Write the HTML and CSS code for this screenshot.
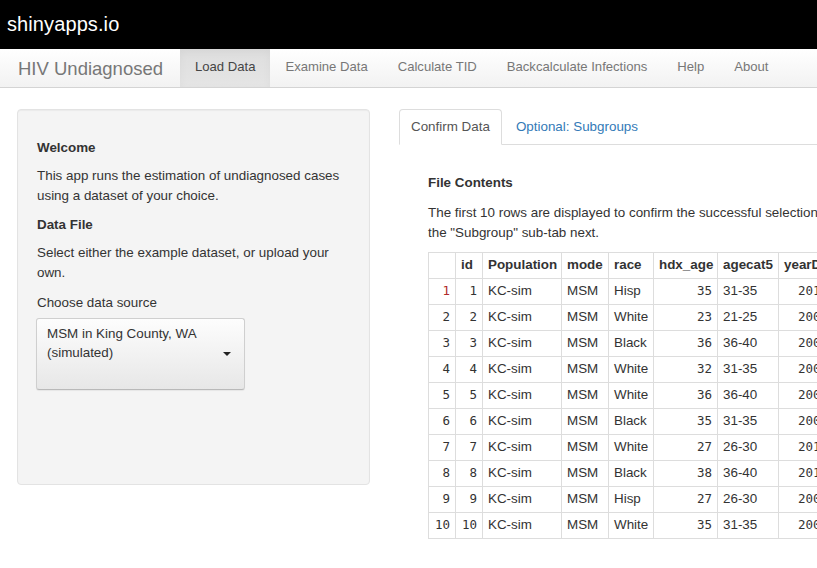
FILE: index.html
```html
<!DOCTYPE html>
<html>
<head>
<meta charset="utf-8">
<title>HIV Undiagnosed</title>
<link rel="stylesheet" href="styles.css">
</head>
<body>
<header class="topbar"><span class="logo">shinyapps.io</span></header>
<nav class="navbar">
  <span class="brand">HIV Undiagnosed</span>
  <ul class="nav">
    <li class="active"><a>Load Data</a></li>
    <li><a>Examine Data</a></li>
    <li><a>Calculate TID</a></li>
    <li><a>Backcalculate Infections</a></li>
    <li><a>Help</a></li>
    <li><a>About</a></li>
  </ul>
</nav>
<div class="main">
  <aside class="well">
    <h5>Welcome</h5>
    <p>This app runs the estimation of undiagnosed cases using a dataset of your choice.</p>
    <h5>Data File</h5>
    <p>Select either the example dataset, or upload your own.</p>
    <div class="form-group">
      <label class="label">Choose data source</label>
      <div class="select">
        <span class="select-text">MSM in King County, WA (simulated)</span>
        <span class="caret"></span>
      </div>
    </div>
    <div class="spacer"></div>
  </aside>
  <section class="content">
    <ul class="tabs">
      <li class="active"><a>Confirm Data</a></li>
      <li><a class="link">Optional: Subgroups</a></li>
    </ul>
    <div class="pane">
      <h5>File Contents</h5>
      <p>The first 10 rows are displayed to confirm the successful selection of a dataset. To analyze subgroups, see<br>the "Subgroup" sub-tab next.</p>
      <table class="data">
        <colgroup>
          <col class="c-rn"><col class="c-id"><col class="c-pop"><col class="c-mode"><col class="c-race"><col class="c-age"><col class="c-cat"><col class="c-yr">
        </colgroup>
        <thead>
          <tr><th></th><th>id</th><th>Population</th><th>mode</th><th>race</th><th>hdx_age</th><th>agecat5</th><th>yearDx</th></tr>
        </thead>
        <tbody>
          <tr><td class="num rn first">1</td><td class="num">1</td><td>KC-sim</td><td>MSM</td><td>Hisp</td><td class="num">35</td><td>31-35</td><td class="num">2011</td></tr>
          <tr><td class="num rn">2</td><td class="num">2</td><td>KC-sim</td><td>MSM</td><td>White</td><td class="num">23</td><td>21-25</td><td class="num">2006</td></tr>
          <tr><td class="num rn">3</td><td class="num">3</td><td>KC-sim</td><td>MSM</td><td>Black</td><td class="num">36</td><td>36-40</td><td class="num">2007</td></tr>
          <tr><td class="num rn">4</td><td class="num">4</td><td>KC-sim</td><td>MSM</td><td>White</td><td class="num">32</td><td>31-35</td><td class="num">2009</td></tr>
          <tr><td class="num rn">5</td><td class="num">5</td><td>KC-sim</td><td>MSM</td><td>White</td><td class="num">36</td><td>36-40</td><td class="num">2008</td></tr>
          <tr><td class="num rn">6</td><td class="num">6</td><td>KC-sim</td><td>MSM</td><td>Black</td><td class="num">35</td><td>31-35</td><td class="num">2005</td></tr>
          <tr><td class="num rn">7</td><td class="num">7</td><td>KC-sim</td><td>MSM</td><td>White</td><td class="num">27</td><td>26-30</td><td class="num">2012</td></tr>
          <tr><td class="num rn">8</td><td class="num">8</td><td>KC-sim</td><td>MSM</td><td>Black</td><td class="num">38</td><td>36-40</td><td class="num">2010</td></tr>
          <tr><td class="num rn">9</td><td class="num">9</td><td>KC-sim</td><td>MSM</td><td>Hisp</td><td class="num">27</td><td>26-30</td><td class="num">2009</td></tr>
          <tr><td class="num rn">10</td><td class="num">10</td><td>KC-sim</td><td>MSM</td><td>White</td><td class="num">35</td><td>31-35</td><td class="num">2006</td></tr>
        </tbody>
      </table>
    </div>
  </section>
</div>
</body>
</html>
```

FILE: styles.css
```css
* { box-sizing: border-box; }
html, body { margin: 0; padding: 0; }
body {
  width: 817px;
  height: 568px;
  overflow: hidden;
  background: #fff;
  color: #333;
  font-family: "Liberation Sans", Arial, Helvetica, sans-serif;
  font-size: 13.4px;
  line-height: 20px;
}

.topbar {
  height: 49px;
  background: #000;
  padding-left: 7px;
  line-height: 49px;
}
.logo {
  color: #fff;
  font-size: 20px;
  font-weight: normal;
  letter-spacing: 0.1px;
}

.navbar {
  display: flex;
  align-items: stretch;
  height: 39px;
  background: linear-gradient(#ffffff, #f2f2f2);
  border-bottom: 1px solid #d4d4d4;
  padding-left: 3px;
}
.brand {
  font-size: 18.5px;
  color: #777;
  padding: 0 17px 0 15px;
  line-height: 20px;
  padding-top: 10px;
}
.nav {
  display: flex;
  list-style: none;
  margin: 0;
  padding: 0;
  font-size: 13.1px;
}
.nav li a {
  display: block;
  height: 38px;
  padding: 8px 15px 10px;
  color: #777;
}
.nav li.active a {
  color: #444;
  background: linear-gradient(#dedede, #e5e5e5);
  box-shadow: inset 0 3px 8px rgba(0,0,0,0.04);
}

.main {
  display: flex;
  align-items: flex-start;
  padding: 21px 0 0 17px;
  gap: 29px;
}

.well {
  flex: none;
  width: 353px;
  background: #f4f4f4;
  border: 1px solid #e3e3e3;
  border-radius: 4px;
  box-shadow: inset 0 1px 1px rgba(0,0,0,0.04);
  padding: 19px 19px 19px 19px;
}
h5 {
  font-size: 13.4px;
  font-weight: bold;
  line-height: 17px;
  margin: 10px 0 10px;
}
p { margin: 0 0 10px; }
.form-group { margin-bottom: 15px; }
.label {
  display: block;
  margin-bottom: 5px;
  font-weight: normal;
}
.select {
  display: flex;
  align-items: flex-start;
  width: 209px;
  height: 72px;
  margin-left: -1px;
  padding: 5px 13px 0 10px;
  border: 1px solid #cfcfcf;
  border-bottom-color: #b9b9b9;
  border-radius: 3px;
  background: linear-gradient(#fdfdfd, #e7e7e7);
  box-shadow: 0 1px 1px rgba(0,0,0,0.06);
  line-height: 19px;
}
.select-text { flex: 1; }
.caret {
  flex: none;
  width: 0;
  height: 0;
  margin-top: 28px;
  border-top: 4px solid #222;
  border-left: 4px solid transparent;
  border-right: 4px solid transparent;
}
.spacer { height: 60px; }

.content {
  flex: none;
  width: 700px;
}
.tabs {
  display: flex;
  list-style: none;
  margin: 0;
  padding: 0;
  border-bottom: 1px solid #ddd;
  height: 36px;
}
.tabs li { margin-right: 2px; margin-bottom: -1px; }
.tabs li a {
  display: block;
  padding: 7px 11px;
  border: 1px solid transparent;
  border-radius: 4px 4px 0 0;
  color: #337ab7;
}
.tabs li.active a {
  color: #555;
  background: #fff;
  border-color: #ddd #ddd transparent;
}

.pane { padding: 29px 0 0 29px; }
.pane h5 { margin: 0 0 11px; line-height: 18px; }
.pane p { margin-bottom: 9px; white-space: nowrap; }

.data {
  border-collapse: collapse;
  table-layout: fixed;
  width: 405px;
  font-size: 13.4px;
}
.c-rn { width: 27px; }
.c-id { width: 27px; }
.c-pop { width: 79px; }
.c-mode { width: 47px; }
.c-race { width: 45px; }
.c-age { width: 64px; }
.c-cat { width: 61px; }
.c-yr { width: 55px; }
.data th, .data td {
  border: 1px solid #ddd;
  padding: 2px 5px 3px;
  line-height: 20px;
  text-align: left;
  white-space: nowrap;
  overflow: hidden;
}
.data th { font-weight: bold; }
.data td.num {
  text-align: right;
  font-family: "DejaVu Sans Mono", Menlo, monospace;
  font-size: 12.5px;
}
.data td.first { color: #b02a2a; }
```
